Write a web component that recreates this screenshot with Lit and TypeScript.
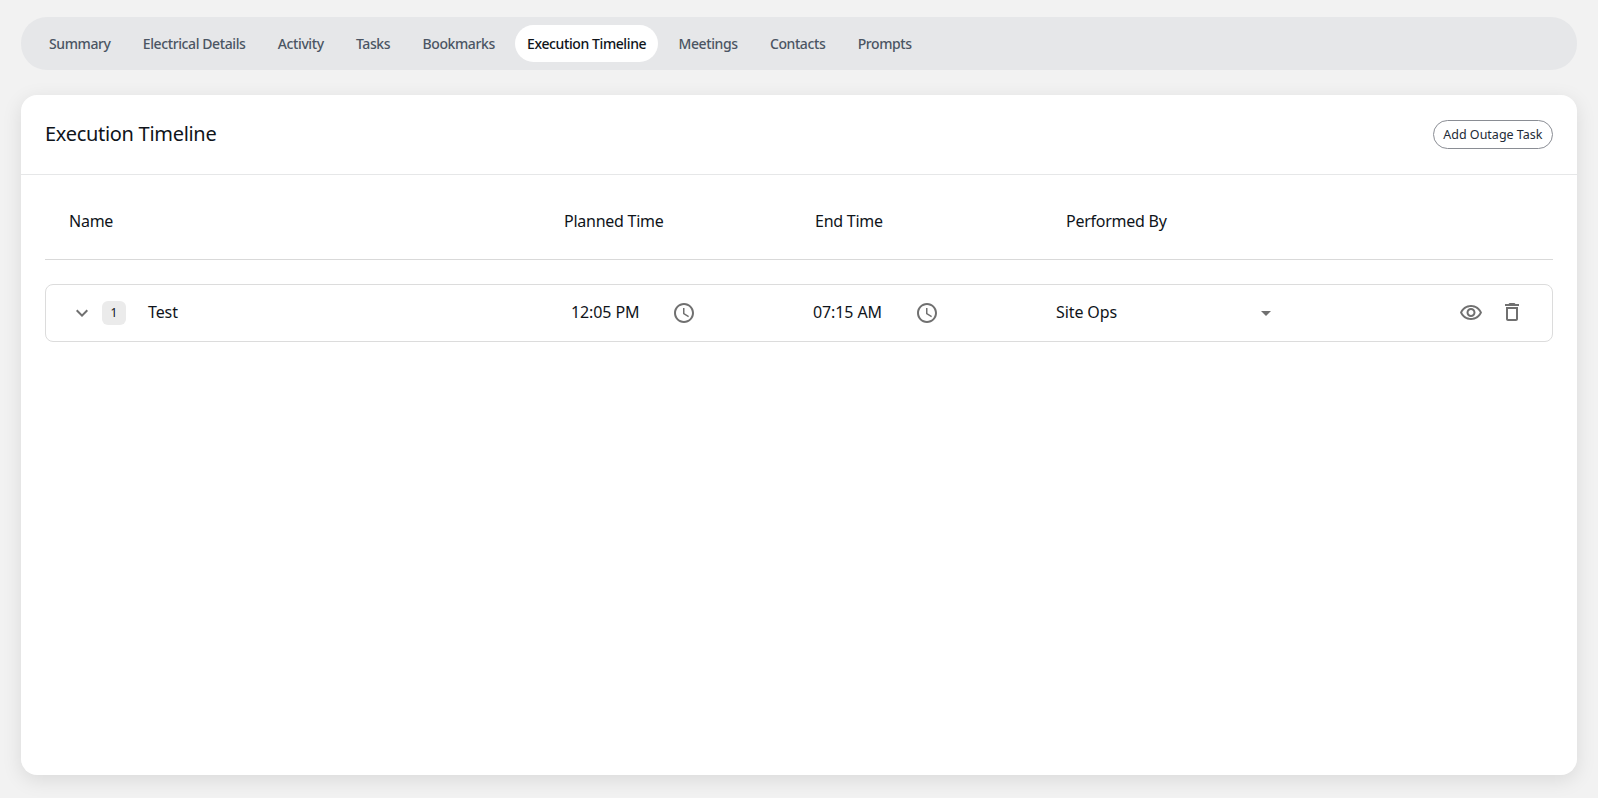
import { LitElement, html, css } from 'lit';
import { customElement, property } from 'lit/decorators.js';

const TABS = ['Summary', 'Electrical Details', 'Activity', 'Tasks', 'Bookmarks', 'Execution Timeline', 'Meetings', 'Contacts', 'Prompts'];

const clockIcon = html`<svg class="icon" width="24" height="24" viewBox="0 0 24 24">
  <path d="M11.99 2C6.47 2 2 6.48 2 12s4.47 10 9.99 10C17.52 22 22 17.52 22 12S17.52 2 11.99 2zM12 20c-4.42 0-8-3.58-8-8s3.58-8 8-8 8 3.58 8 8-3.58 8-8 8zm.5-13H11v6l5.25 3.15.75-1.23-4.5-2.67z"></path>
</svg>`;

@customElement('app-root')
export class AppRoot extends LitElement {
  @property({ type: String }) active = 'Execution Timeline';

  static styles = css`
    :host {
      display: block;
      box-sizing: border-box;
      height: 798px;
      padding: 17px 21px 0;
      background: #f2f2f2;
      color: #0f141a;
      font-family: "Noto Sans", "Open Sans", sans-serif;
      overflow: hidden;
    }

    .tabs {
      display: flex;
      align-items: center;
      height: 53px;
      padding: 0 16px;
      gap: 8.3px;
      border-radius: 26px;
      background: #e6e7e9;
    }

    .tab {
      display: flex;
      align-items: center;
      height: 37px;
      padding: 0 12px;
      border-radius: 19px;
      font-size: 14px;
      font-weight: 500;
      letter-spacing: -0.4px;
      color: #4b5563;
      white-space: nowrap;
    }

    .tab.on {
      background: #fff;
      color: #0f141a;
    }

    .card {
      display: flex;
      flex-direction: column;
      height: 680px;
      margin-top: 25px;
      border-radius: 16px;
      background: #fff;
      box-shadow: 0 5px 20px rgba(0, 0, 0, 0.1);
    }

    .head {
      display: flex;
      align-items: center;
      justify-content: space-between;
      height: 79px;
      padding: 0 24px;
      border-bottom: 1px solid #e6e7e8;
    }

    h2 {
      margin: 0 0 2px;
      font-size: 20px;
      font-weight: 400;
      letter-spacing: -0.3px;
    }

    .add {
      height: 29px;
      padding: 0 9.5px;
      border: 1px solid #8a8d94;
      border-radius: 15px;
      background: #fff;
      color: #232b37;
      font: inherit;
      font-size: 12.5px;
      letter-spacing: 0;
    }

    .body {
      padding: 0 24px;
    }

    .cols {
      display: grid;
      grid-template-columns: 495px 251px 251px 1fr;
      align-items: center;
      height: 76px;
      padding: 8px 0 0 24px;
      border-bottom: 1px solid #d9d9d9;
      font-size: 16px;
      letter-spacing: -0.25px;
    }

    .row {
      display: flex;
      align-items: center;
      height: 56px;
      margin-top: 24px;
      border: 1px solid #dcdcdc;
      border-radius: 8px;
      font-size: 16px;
      letter-spacing: -0.1px;
    }

    .name {
      display: flex;
      align-items: center;
      flex: none;
      width: 525px;
      padding-left: 24px;
      box-sizing: border-box;
    }

    .badge {
      display: flex;
      align-items: center;
      justify-content: center;
      box-sizing: border-box;
      width: 24px;
      height: 24px;
      margin: 0 22px 0 8px;
      padding-bottom: 1px;
      border-radius: 6px;
      background: #ebebeb;
      font-size: 12px;
    }

    .label {
      margin-bottom: 2px;
    }

    .time {
      display: flex;
      align-items: center;
      justify-content: space-between;
      flex: none;
      width: 125px;
    }

    .t1 { margin-right: 117px; }
    .t2 { width: 126px; margin-right: 117px; }

    .who {
      display: flex;
      align-items: center;
      justify-content: space-between;
      flex: none;
      width: 215px;
    }

    .actions {
      display: flex;
      align-items: center;
      gap: 17px;
      margin-left: auto;
      padding-right: 28px;
    }

    .icon {
      display: block;
      flex: none;
      fill: #707070;
    }

    .trash {
      margin-bottom: 2px;
    }
  `;

  render() {
    return html`
      <nav class="tabs">
        ${TABS.map(t => html`<div class="tab ${t === this.active ? 'on' : ''}">${t}</div>`)}
      </nav>
      <section class="card">
        <div class="head">
          <h2>Execution Timeline</h2>
          <button class="add">Add Outage Task</button>
        </div>
        <div class="body">
          <div class="cols">
            <span>Name</span>
            <span>Planned Time</span>
            <span>End Time</span>
            <span>Performed By</span>
          </div>
          <div class="row">
            <div class="name">
              <svg class="icon" width="24" height="24" viewBox="0 0 24 24">
                <path d="M16.59 8.59L12 13.17 7.41 8.59 6 10l6 6 6-6z"></path>
              </svg>
              <span class="badge">1</span>
              <span class="label">Test</span>
            </div>
            <div class="time t1"><span class="label">12:05 PM</span>${clockIcon}</div>
            <div class="time t2"><span class="label">07:15 AM</span>${clockIcon}</div>
            <div class="who">
              <span class="label">Site Ops</span>
              <svg class="icon" width="10" height="5" viewBox="7 10 10 5"><path d="M7 10l5 5 5-5z"></path></svg>
            </div>
            <div class="actions">
              <svg class="icon" width="24" height="24" viewBox="0 0 24 24">
                <path d="M12 6c3.79 0 7.17 2.13 8.82 5.5C19.17 14.87 15.79 17 12 17s-7.17-2.13-8.82-5.5C4.83 8.13 8.21 6 12 6m0-2C7 4 2.73 7.11 1 11.5 2.73 15.89 7 19 12 19s9.27-3.11 11-7.5C21.27 7.11 17 4 12 4zm0 5c1.38 0 2.5 1.12 2.5 2.5S13.38 14 12 14s-2.5-1.12-2.5-2.5S10.62 9 12 9m0-2c-2.48 0-4.5 2.02-4.5 4.5S9.52 16 12 16s4.5-2.02 4.5-4.5S14.48 7 12 7z"></path>
              </svg>
              <svg class="icon trash" width="24" height="24" viewBox="0 0 24 24">
                <path d="M16 9v10H8V9h8m-1.5-6h-5l-1 1H5v2h14V4h-3.5l-1-1zM18 7H6v12c0 1.1.9 2 2 2h8c1.1 0 2-.9 2-2V7z"></path>
              </svg>
            </div>
          </div>
        </div>
      </section>
    `;
  }
}

declare global {
  interface HTMLElementTagNameMap {
    'app-root': AppRoot;
  }
}
